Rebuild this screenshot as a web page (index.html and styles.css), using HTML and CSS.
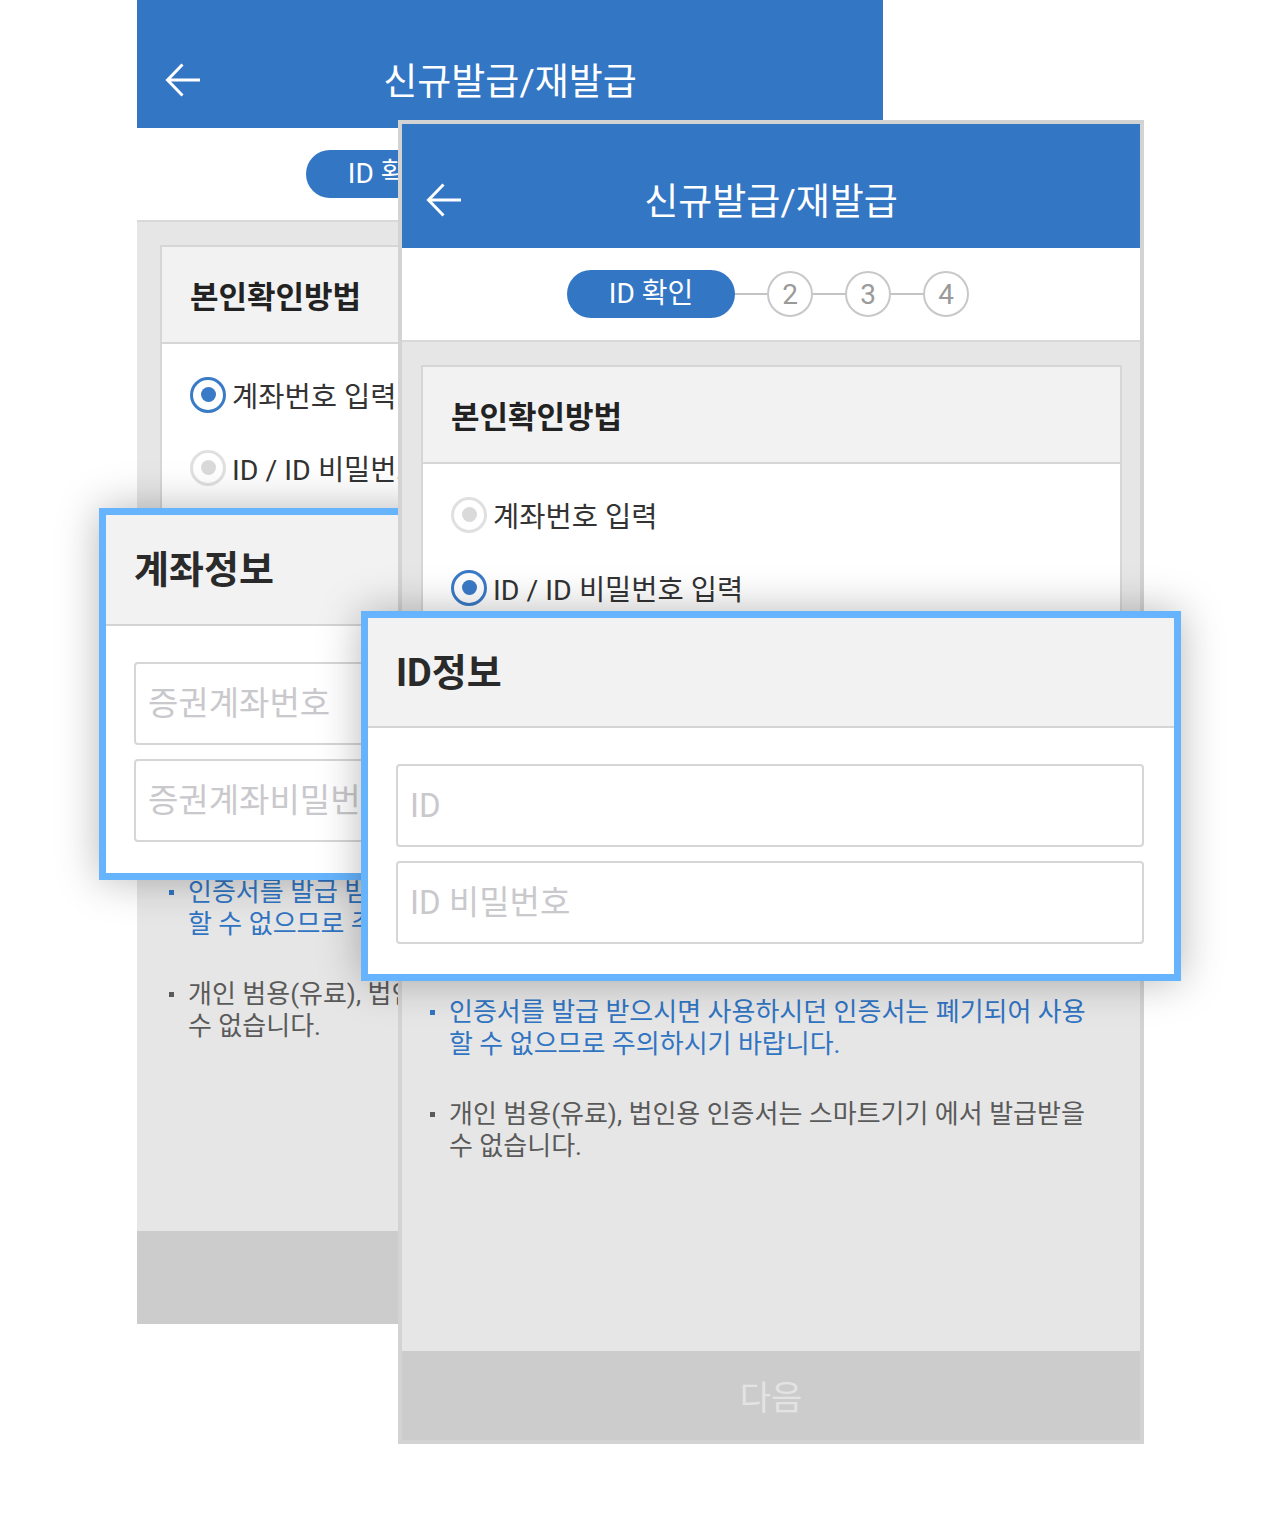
FILE: index.html
```html
<!DOCTYPE html>
<html lang="ko">
<head>
    <meta charset="UTF-8">
    <meta name="viewport" content="width=device-width, initial-scale=1.0">
    <title>신규발급/재발급</title>
    <link rel="stylesheet" href="styles.css">
</head>
<body>
    <div class="stage">

        <!-- Screen 1: account number method -->
        <div class="phone phone-back">
            <header class="appbar">
                <span class="back-btn">
                    <svg width="36" height="36" viewBox="0 0 36 36"><path d="M35 18H3M17.5 2.5L2.5 18L17.5 33.5" fill="none" stroke="#fff" stroke-width="3"/></svg>
                </span>
                <h1>신규발급/재발급</h1>
                <span></span>
            </header>
            <div class="steps">
                <span class="step-current">ID 확인</span>
                <span class="step-line"></span><span class="step-num">2</span>
                <span class="step-line"></span><span class="step-num">3</span>
                <span class="step-line"></span><span class="step-num">4</span>
            </div>
            <main class="content">
                <section class="card">
                    <h2 class="card-title">본인확인방법</h2>
                    <div class="radios">
                        <label class="radio"><span class="radio-mark on"></span>계좌번호 입력</label>
                        <label class="radio"><span class="radio-mark"></span>ID / ID 비밀번호 입력</label>
                    </div>
                </section>
                <section class="card info-card">
                    <h2 class="card-title">계좌정보</h2>
                    <div class="fields">
                        <input type="text" placeholder="증권계좌번호">
                        <input type="password" placeholder="증권계좌비밀번호">
                    </div>
                </section>
                <ul class="notes">
                    <li class="note-blue">인증서를 발급 받으시면 사용하시던 인증서는 폐기되어 사용<br>할 수 없으므로 주의하시기 바랍니다.</li>
                    <li>개인 범용(유료), 법인용 인증서는 스마트기기 에서 발급받을<br>수 없습니다.</li>
                </ul>
            </main>
            <div class="next-btn">다음</div>
        </div>

        <!-- Magnified card for screen 1 -->
        <div class="zoom-card zoom-account">
            <h2 class="zoom-title">계좌정보</h2>
            <div class="zoom-fields">
                <input type="text" placeholder="증권계좌번호">
                <input type="password" placeholder="증권계좌비밀번호">
            </div>
        </div>

        <!-- Screen 2: ID method -->
        <div class="phone phone-front">
            <header class="appbar">
                <span class="back-btn">
                    <svg width="36" height="36" viewBox="0 0 36 36"><path d="M35 18H3M17.5 2.5L2.5 18L17.5 33.5" fill="none" stroke="#fff" stroke-width="3"/></svg>
                </span>
                <h1>신규발급/재발급</h1>
                <span></span>
            </header>
            <div class="steps">
                <span class="step-current">ID 확인</span>
                <span class="step-line"></span><span class="step-num">2</span>
                <span class="step-line"></span><span class="step-num">3</span>
                <span class="step-line"></span><span class="step-num">4</span>
            </div>
            <main class="content">
                <section class="card">
                    <h2 class="card-title">본인확인방법</h2>
                    <div class="radios">
                        <label class="radio"><span class="radio-mark"></span>계좌번호 입력</label>
                        <label class="radio"><span class="radio-mark on"></span>ID / ID 비밀번호 입력</label>
                    </div>
                </section>
                <section class="card info-card">
                    <h2 class="card-title">ID정보</h2>
                    <div class="fields">
                        <input type="text" placeholder="ID">
                        <input type="password" placeholder="ID 비밀번호">
                    </div>
                </section>
                <ul class="notes">
                    <li class="note-blue">인증서를 발급 받으시면 사용하시던 인증서는 폐기되어 사용<br>할 수 없으므로 주의하시기 바랍니다.</li>
                    <li>개인 범용(유료), 법인용 인증서는 스마트기기 에서 발급받을<br>수 없습니다.</li>
                </ul>
            </main>
            <div class="next-btn">다음</div>
        </div>

        <!-- Magnified card for screen 2 -->
        <div class="zoom-card zoom-id">
            <h2 class="zoom-title">ID정보</h2>
            <div class="zoom-fields">
                <input type="text" placeholder="ID">
                <input type="password" placeholder="ID 비밀번호">
            </div>
        </div>

    </div>
</body>
</html>
```

FILE: styles.css
```css
body {
    margin: 0;
    padding: 0;
    background-color: #fff;
    font-family: Roboto, "Noto Sans CJK KR", sans-serif;
}
.stage {
    position: relative;
    width: 1280px;
    height: 1525px;
    overflow: hidden;
}

/* phone screens */
.phone {
    position: absolute;
    width: 746px;
    height: 1324px;
    display: flex;
    flex-direction: column;
    background-color: #e6e6e6;
}
.phone-back {
    left: 137px;
    top: 0;
}
.phone-front {
    left: 398px;
    top: 120px;
}
.phone-front::after {
    content: "";
    position: absolute;
    inset: 0;
    border: 4px solid #d3d3d3;
    pointer-events: none;
}
.appbar {
    height: 128px;
    box-sizing: border-box;
    padding: 36px 28px 0;
    display: grid;
    grid-template-columns: 1fr auto 1fr;
    align-items: center;
    background-color: #3376c4;
    color: white;
}
.back-btn {
    display: flex;
    margin-top: -4px;
}
.appbar h1 {
    margin: 0;
    font-size: 37px;
    font-weight: 400;
    line-height: 1;
}
.steps {
    height: 92px;
    display: flex;
    align-items: center;
    justify-content: center;
    padding-right: 6px;
    background-color: white;
    border-bottom: 2px solid #d9d9d9;
}
.step-current {
    width: 168px;
    height: 48px;
    border-radius: 24px;
    background-color: #3376c4;
    color: white;
    font-size: 28px;
    line-height: 48px;
    text-align: center;
}
.step-line {
    width: 32px;
    height: 2px;
    background-color: #c4c4c4;
}
.step-num {
    width: 46px;
    height: 46px;
    box-sizing: border-box;
    border: 2px solid #c8c8c8;
    border-radius: 50%;
    display: flex;
    align-items: center;
    justify-content: center;
    color: #9a9a9a;
    font-size: 28px;
}

/* content */
.content {
    flex: 1;
    padding: 23px 22px 0 23px;
}
.card {
    background-color: white;
    border: 2px solid #d6d6d6;
}
.card-title {
    margin: 0;
    height: 95px;
    display: flex;
    align-items: center;
    padding-left: 28px;
    background-color: #f2f2f2;
    border-bottom: 2px solid #d6d6d6;
    color: #222;
    font-size: 31px;
    font-weight: 700;
}
.radios {
    padding: 14px 28px 20px;
}
.radio {
    height: 73px;
    display: flex;
    align-items: center;
    gap: 6px;
    color: #333;
    font-size: 28.5px;
}
.radio-mark {
    width: 36px;
    height: 36px;
    box-sizing: border-box;
    border: 3px solid #e0e0e0;
    border-radius: 50%;
    display: flex;
    align-items: center;
    justify-content: center;
}
.radio-mark::after {
    content: "";
    width: 15px;
    height: 15px;
    border-radius: 50%;
    background-color: #dadada;
}
.radio-mark.on {
    border-color: #3a7bc8;
}
.radio-mark.on::after {
    background-color: #3a7bc8;
}
.info-card {
    margin-top: 18px;
}
.fields {
    display: grid;
    gap: 12px;
    padding: 28px;
}
.fields input {
    height: 70px;
    box-sizing: border-box;
    border: 2px solid #d6d6d6;
    border-radius: 4px;
    padding: 0 12px;
    font-family: inherit;
    font-size: 27px;
}
.notes {
    list-style-type: none;
    margin: 23px 0 0;
    padding: 0 9px;
    color: #5a5a5a;
    font-size: 26px;
    line-height: 32px;
}
.notes li {
    display: flex;
    gap: 14px;
    white-space: nowrap;
}
.notes li::before {
    content: "";
    flex: none;
    width: 5px;
    height: 5px;
    margin-top: 14px;
    background-color: currentColor;
}
.notes .note-blue {
    color: #3174c2;
    margin-bottom: 38px;
}
.next-btn {
    height: 93px;
    display: flex;
    align-items: center;
    justify-content: center;
    background-color: #cccccc;
    color: #e3e3e3;
    font-size: 34px;
    padding-bottom: 4px;
    box-sizing: border-box;
}

/* magnified cards */
.zoom-card {
    position: absolute;
    width: 820px;
    height: 370px;
    box-sizing: border-box;
    border: 7px solid #66b4fe;
    background-color: white;
    box-shadow: 0 0 40px rgba(0, 0, 0, 0.28);
}
.zoom-account {
    left: 99px;
    top: 508px;
    height: 372px;
}
.zoom-id {
    left: 361px;
    top: 611px;
}
.zoom-title {
    margin: 0;
    height: 102px;
    display: flex;
    align-items: center;
    padding: 0 0 6px 28px;
    background-color: #f2f2f2;
    border-bottom: 2px solid #d4d4d4;
    color: #2a2a2a;
    font-size: 38px;
    font-weight: 700;
}
.zoom-account .zoom-title {
    height: 103px;
}
.zoom-fields {
    display: grid;
    gap: 14px;
    padding: 36px 30px 30px 28px;
}
.zoom-fields input {
    height: 83px;
    box-sizing: border-box;
    border: 2px solid #d6d6d6;
    border-radius: 4px;
    padding: 0 12px;
    font-family: inherit;
    font-size: 33px;
}
.zoom-fields input::placeholder,
.fields input::placeholder {
    color: #c9c9cd;
}
```
